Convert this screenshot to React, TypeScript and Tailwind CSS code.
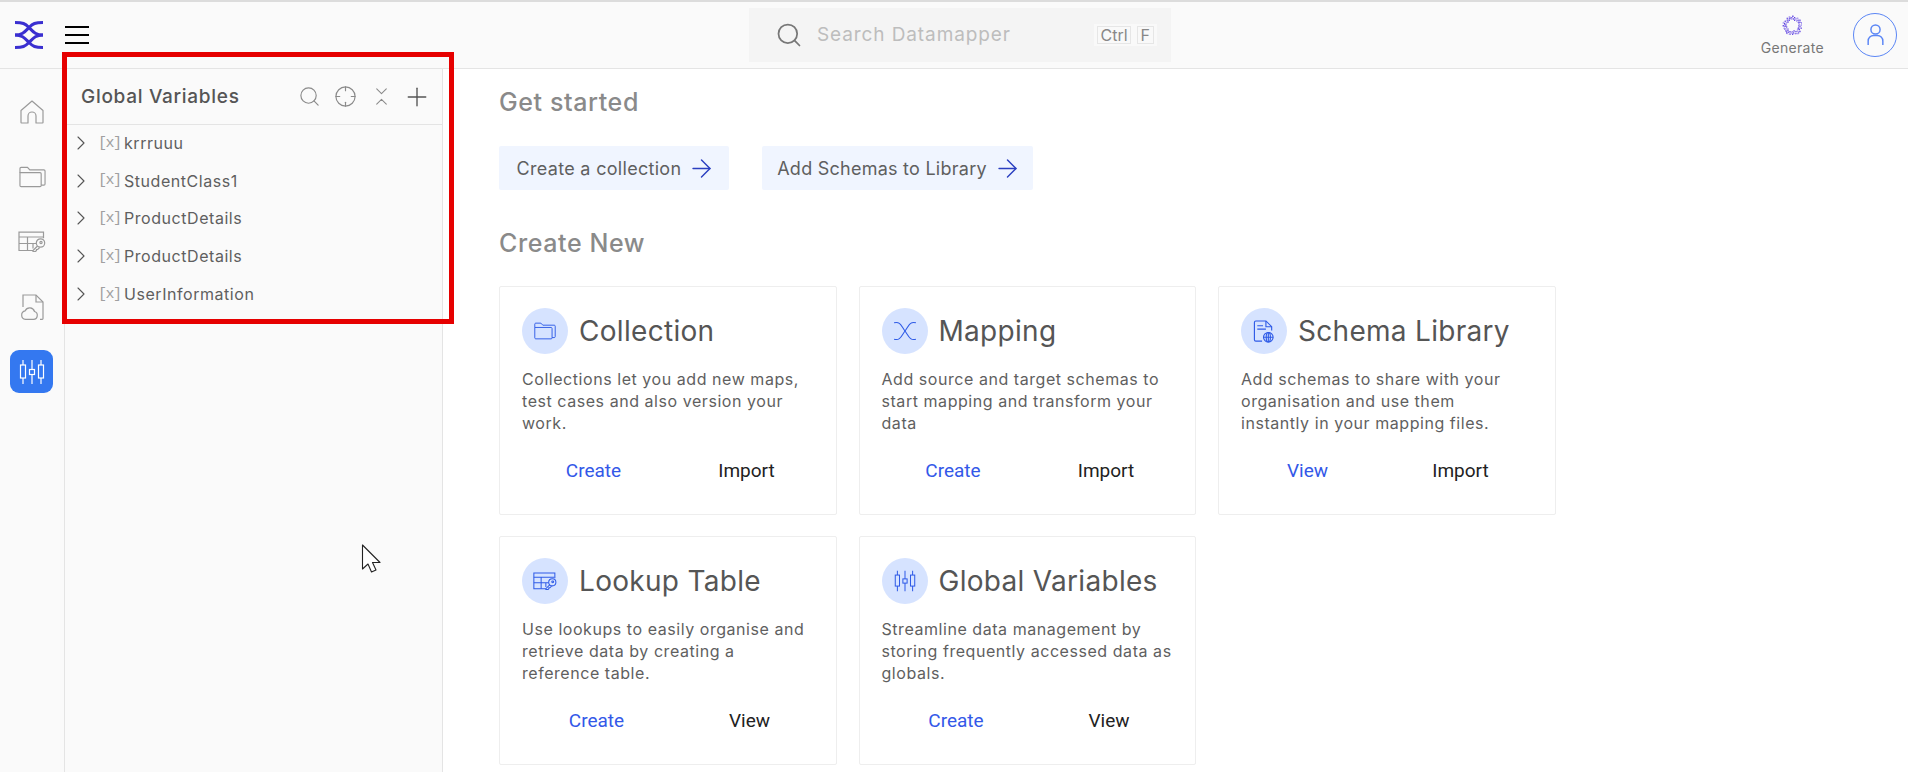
import React from "react";
import { ArrowRight, ChevronRight, ChevronsDownUp, Crosshair, Plus, Search } from "lucide-react";

const HomeIcon = ({ className }: { className?: string }) => (
  <svg viewBox="0 0 24 24" fill="none" stroke="currentColor" strokeWidth="1.2" className={className}>
    <path d="M1 10.5 12 1l11 9.5V22.5a.5.5 0 0 1-.5.5H16v-7a4 4 0 0 0-8 0v7H1.5a.5.5 0 0 1-.5-.5Z" strokeLinejoin="round" />
  </svg>
);

const FolderIcon = ({ className }: { className?: string }) => (
  <svg viewBox="0 0 28 22" fill="none" stroke="currentColor" strokeWidth="1.2" className={className}>
    <path d="M1 6.5V2.2C1 1.5 1.5 1 2.2 1h6.6l2.4 2.6h14.6c.7 0 1.2.5 1.2 1.2v13.4c0 .7-.5 1.2-1.2 1.2H23" />
    <path d="M1 6.5h20.8c.7 0 1.2.5 1.2 1.2v12.1c0 .7-.5 1.2-1.2 1.2H2.2c-.7 0-1.2-.5-1.2-1.2Z" />
  </svg>
);

const TableKeyIcon = ({ className }: { className?: string }) => (
  <svg viewBox="0 0 28 21" fill="none" stroke="currentColor" strokeWidth="1.2" className={className}>
    <path d="M15 19.5H1V1.2h24.5v6" />
    <path d="M1 6h24M1 12.5h17M9.5 6v13.5M15 12.5v5" />
    <circle cx="22.5" cy="12" r="4.2" />
    <circle cx="23" cy="11.5" r="1.1" />
    <path d="m19.5 15-4.5 4.5v1h2.5l1-1v-1h1.2l2-2" />
  </svg>
);

const FileCloudIcon = ({ className }: { className?: string }) => (
  <svg viewBox="0 0 24 26" fill="none" stroke="currentColor" strokeWidth="1.2" className={className}>
    <path d="M3 13V1h13l7 7v16.5c0 .5-.3.8-.8.8H20" />
    <path d="M16 1v7h7" />
    <path d="M5.5 25.300h8a4 4 0 0 0 1-7.800 5 5 0 0 0-9.300-.700 4.300 4.300 0 0 0 .3 8.500Z" />
  </svg>
);

const SlidersIcon = ({ className }: { className?: string }) => (
  <svg viewBox="0 0 26 26" fill="none" stroke="currentColor" strokeWidth="1.2" className={className}>
    <rect x="1.500" y="6" width="5" height="13" />
    <path d="M4 1v5M4 19v6" />
    <rect x="10.500" y="10.500" width="5" height="5" />
    <path d="M13 1v9.500M13 15.500V25" />
    <rect x="19.500" y="6" width="5" height="13" />
    <path d="M22 1v5M22 19v6" />
  </svg>
);

const MappingIcon = ({ className }: { className?: string }) => (
  <svg viewBox="0 0 26 22" fill="none" stroke="currentColor" strokeWidth="1.2" className={className}>
    <path d="M1 2C8 0 9 6 13 11c4 5 5 11 12 9" />
    <path d="M25 2C18 0 17 6 13 11c-4 5-5 11-12 9" />
  </svg>
);

const SchemaIcon = ({ className }: { className?: string }) => (
  <svg viewBox="0 0 22 24" fill="none" stroke="currentColor" strokeWidth="1.200" className={className}>
    <path d="M9 22H2.500A1.500 1.500 0 0 1 1 20.500V2.500A1.500 1.500 0 0 1 2.500 1H13l6 6v4" />
    <path d="M13 1v6h6M4 6h6M4 9.500h9" />
    <circle cx="15.500" cy="18" r="5" />
    <path d="M10.500 18h10M15.500 13v10" />
    <ellipse cx="15.500" cy="18" rx="2.200" ry="5" />
  </svg>
);

const Logo = () => (
  <svg viewBox="0 0 28 28" fill="none" stroke="#3a2fd0" strokeWidth="3" className="w-[28px] h-[28px]">
    <path d="M0 1.500c8 0 10 1 14 5 4 4 6 7.500 14 7.500" />
    <path d="M28 1.500c-8 0-10 1-14 5-4 4-6 7.500-14 7.500" />
    <path d="M0 14c8 0 10 3.500 14 7.500 4 4 6 5 14 5" />
    <path d="M28 14c-8 0-10 3.500-14 7.500-4 4-6 5-14 5" />
  </svg>
);

const ringDots = Array.from({ length: 120 }, (_, i) => {
  const angle = i * 2.399963;
  const radius = 5.8 + ((i * 7) % 11) * 0.38;
  return {
    x: Math.round((10 + radius * Math.cos(angle)) * 1.5) / 1.5,
    y: Math.round((10 + radius * Math.sin(angle)) * 1.5) / 1.5,
    color: i % 3 === 0 ? "#5b3fe0" : i % 3 === 1 ? "#8f7bea" : "#b4a6f0",
  };
});

const GenerateIcon = () => (
  <svg viewBox="0 0 20 20" className="w-[20px] h-[20px]">
    {ringDots.map((d, i) => (
      <rect key={i} x={d.x} y={d.y} width="1.200" height="1.200" fill={d.color} />
    ))}
  </svg>
);

const rail = [
  { icon: <HomeIcon className="w-[24px] h-[24px]" /> },
  { icon: <FolderIcon className="w-[27px] h-[22px]" /> },
  { icon: <TableKeyIcon className="w-[28px] h-[21px]" /> },
  { icon: <FileCloudIcon className="w-[24px] h-[26px]" /> },
];

const variables = ["krrruuu", "StudentClass1", "ProductDetails", "ProductDetails", "UserInformation"];

const cards = [
  {
    title: "Collection",
    icon: <FolderIcon className="w-[22px] h-[18px]" />,
    lines: ["Collections let you add new maps,", "test cases and also version your", "work."],
    first: "Create",
    second: "Import",
    row: "ml-[-5px]",
  },
  {
    title: "Mapping",
    icon: <MappingIcon className="w-[24px] h-[20px]" />,
    lines: ["Add source and target schemas to", "start mapping and transform your", "data"],
    first: "Create",
    second: "Import",
    row: "ml-[-5px]",
  },
  {
    title: "Schema Library",
    icon: <SchemaIcon className="w-[22px] h-[23px]" />,
    lines: ["Add schemas to share with your", "organisation and use them", "instantly in your mapping files."],
    first: "View",
    second: "Import",
    row: "ml-[-10px]",
  },
  {
    title: "Lookup Table",
    icon: <TableKeyIcon className="w-[24px] h-[18px]" />,
    lines: ["Use lookups to easily organise and", "retrieve data by creating a", "reference table."],
    first: "Create",
    second: "View",
    row: "ml-[-2px]",
  },
  {
    title: "Global Variables",
    icon: <SlidersIcon className="w-[22px] h-[22px]" />,
    lines: ["Streamline data management by", "storing frequently accessed data as", "globals."],
    first: "Create",
    second: "View",
    row: "ml-[-2px]",
  },
];

function Card({ title, icon, lines, first, second, row }: (typeof cards)[number]) {
  return (
    <div className="h-[229px] border border-[#eeeeee] rounded-[2px] bg-white pt-[21px] px-[22px]">
      <div className="flex items-center gap-[11px] h-[46px]">
        <div className="w-[46px] h-[46px] rounded-full bg-[#d6e3ff] text-[#2f5be7] flex items-center justify-center">{icon}</div>
        <span className="text-[28px] text-[#555555] tracking-[0.3px]">{title}</span>
      </div>
      <p className="mt-[14px] h-[66px] whitespace-nowrap text-[16px] leading-[22px] text-[#5f5f5f] tracking-[0.55px]">
        {lines.map((line) => (
          <span key={line} className="block">
            {line}
          </span>
        ))}
      </p>
      <div className={`${row} mt-[25px] flex font-['Roboto',sans-serif] text-[19px] leading-[24px]`}>
        <span className="w-[153px] shrink-0 text-center text-[#3358e8]">{first}</span>
        <span className="w-[153px] shrink-0 text-center text-[#222222]">{second}</span>
      </div>
    </div>
  );
}

export default function App() {
  return (
    <div className="relative w-[1908px] h-[772px] overflow-hidden bg-white font-['Inter',sans-serif]">
      <div className="h-[2px] bg-[#dcdcdc]" />
      <header className="h-[67px] bg-[#fafafa] border-b border-[#e4e4e4] flex items-center pl-[15px] pr-[11px]">
        <Logo />
        <button className="ml-[22px] w-[24px] flex flex-col gap-[6px]">
          <span className="h-[2px] bg-black" />
          <span className="h-[2px] bg-black" />
          <span className="h-[2px] bg-black" />
        </button>
        <div className="ml-[660px] w-[422px] h-[54px] bg-[#f4f4f4] flex items-center pl-[26px] pr-[14px]">
          <Search className="w-[28px] h-[28px] text-[#777777]" strokeWidth={1.500} />
          <span className="ml-[14px] text-[19px] text-[#bdbdbd] tracking-[0.9px]">Search Datamapper</span>
          <div className="ml-auto h-[22px] bg-[#f9f9f9] flex items-center gap-[6px] px-[3px] text-[16px] text-[#888888]">
            <kbd className="font-['Inter',sans-serif] border border-[#e6e6e6] leading-[16px] px-[2px]">Ctrl</kbd>
            <kbd className="font-['Inter',sans-serif] border border-[#e6e6e6] leading-[16px] px-[3px]">F</kbd>
          </div>
        </div>
        <div className="ml-auto flex flex-col items-center mr-[29px]">
          <GenerateIcon />
          <span className="mt-[5px] text-[14px] leading-[16px] text-[#777777] tracking-[0.3px]">Generate</span>
        </div>
        <div className="w-[44px] h-[44px] rounded-full border border-[#5b86f5] flex items-center justify-center">
          <svg viewBox="0 0 20 24" fill="none" stroke="#5b86f5" strokeWidth="1.600" className="w-[19px] h-[22px]">
            <circle cx="10" cy="6" r="5" />
            <path d="M2 23v-4.500a6 6 0 0 1 6-6h4a6 6 0 0 1 6 6V23" />
          </svg>
        </div>
      </header>
      <div className="flex h-[703px]">
        <nav className="w-[65px] shrink-0 bg-[#fafafa] border-r border-[#e4e4e4] flex flex-col items-center pt-[10px] text-[#9a9a9a]">
          {rail.map((item, i) => (
            <div key={i} className="h-[65px] flex items-center justify-center">
              {item.icon}
            </div>
          ))}
          <div className="ml-[-1px] w-[43px] h-[43px] rounded-[9px] bg-[#3478f0] text-white flex items-center justify-center mt-[11px]">
            <SlidersIcon className="w-[26px] h-[26px]" />
          </div>
        </nav>
        <aside className="w-[378px] shrink-0 bg-[#fafafa] border-r border-[#e4e4e4]">
          <div className="h-[56px] border-b border-[#e4e4e4] flex items-center pl-[16px] pr-[14px]">
            <h2 className="mt-[1px] text-[19px] font-medium text-[#555555] tracking-[0.7px]">Global Variables</h2>
            <div className="ml-auto flex items-center gap-[13px] text-[#8a8a8a]">
              <Search className="w-[23px] h-[23px]" strokeWidth={1.200} />
              <Crosshair className="w-[23px] h-[23px]" strokeWidth={1.200} />
              <ChevronsDownUp className="w-[23px] h-[23px]" strokeWidth={1.100} />
              <Plus className="w-[30px] h-[30px] -m-[4px] text-[#555555]" strokeWidth={1.100} />
            </div>
          </div>
          <ul className="-mt-[1px]">
            {variables.map((name, i) => (
              <li key={i} className="h-[37.800px] flex items-center pl-[4px]">
                <ChevronRight className="w-[24px] h-[24px] text-[#555555]" strokeWidth={1.100} />
                <span className="ml-[5px] mt-[2px] w-[26px] font-['Liberation_Mono',monospace] text-[15px] text-[#a0a0a0] tracking-[-1.500px]">[x]</span>
                <span className="text-[16px] text-[#5f5f5f] tracking-[0.55px]">{name}</span>
              </li>
            ))}
          </ul>
        </aside>
        <main className="flex-1 bg-white pl-[56px] pt-[15px]">
          <h2 className="text-[25px] leading-[36px] font-medium text-[#8a8a8a] tracking-[0.6px]">Get started</h2>
          <div className="mt-[26px] flex gap-[33px]">
            <button className="w-[230px] h-[44px] pl-[5px] bg-[#f0f5ff] rounded-[2px] flex items-center justify-center gap-[6px] text-[18px] text-[#5f5f5f] tracking-[0.3px]">
              Create a collection <ArrowRight className="w-[29px] h-[29px] text-[#2b3fc0]" strokeWidth={1.200} />
            </button>
            <button className="w-[271px] h-[44px] pl-[4px] bg-[#f0f5ff] rounded-[2px] flex items-center justify-center gap-[6px] text-[18px] text-[#5f5f5f] tracking-[0.25px]">
              Add Schemas to Library <ArrowRight className="w-[29px] h-[29px] text-[#2b3fc0]" strokeWidth={1.200} />
            </button>
          </div>
          <h2 className="mt-[35px] text-[25px] leading-[36px] font-medium text-[#8a8a8a] tracking-[0.6px]">Create New</h2>
          <div className="mt-[25px] grid grid-cols-[repeat(3,337.500px)] gap-x-[22px] gap-y-[21px]">
            {cards.map((card) => (
              <Card key={card.title} {...card} />
            ))}
          </div>
        </main>
      </div>
      <div className="absolute left-[62px] top-[52px] w-[392px] h-[272px] border-[5px] border-[#e60000] pointer-events-none" />
      <svg viewBox="0 0 20 30" className="absolute left-[361px] top-[544px] w-[20px] h-[30px]">
        <path d="M1.500 1v24l5.500-5 3.500 8 4.500-2-3.500-7.500H19Z" fill="white" stroke="#222222" strokeWidth="1.100" strokeLinejoin="round" />
      </svg>
    </div>
  );
}
